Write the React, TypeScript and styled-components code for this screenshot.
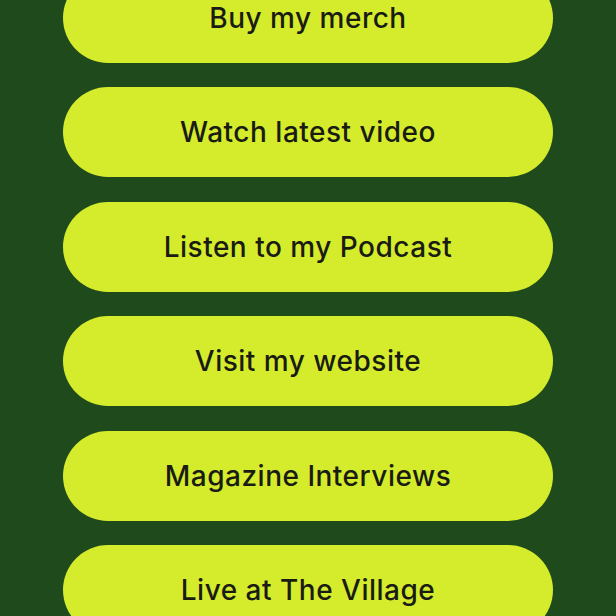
import React from "react";
import styled, { createGlobalStyle } from "styled-components";

const links = [
  "Buy my merch",
  "Watch latest video",
  "Listen to my Podcast",
  "Visit my website",
  "Magazine Interviews",
  "Live at The Village",
];

const GlobalStyle = createGlobalStyle`
  html, body {
    margin: 0;
    padding: 0;
    background-color: #1f4a1c;
    overflow: hidden;
  }
`;

const Page = styled.div`
  width: 616px;
  height: 616px;
  overflow: hidden;
  background-color: #1f4a1c;
`;

const List = styled.div`
  display: flex;
  flex-direction: column;
  gap: 24.5px;
  padding: 0 63px;
  margin-top: -27.5px;
`;

const LinkButton = styled.a`
  display: flex;
  align-items: center;
  justify-content: center;
  height: 90px;
  border-radius: 45px;
  background-color: #d4ec2c;
  color: #1a1c14;
  font-family: Inter, "Noto Sans", sans-serif;
  font-size: 28px;
  font-weight: 500;
  letter-spacing: 0.5px;
  text-decoration: none;
  cursor: pointer;
`;

const App = () => {
  return (
    <Page>
      <GlobalStyle />
      <List>
        {links.map((label) => (
          <LinkButton key={label}>{label}</LinkButton>
        ))}
      </List>
    </Page>
  );
};

export default App;
